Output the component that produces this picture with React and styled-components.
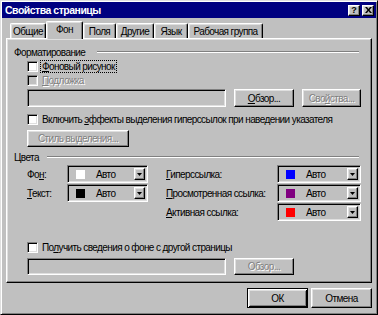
import React from 'react';
import styled, { createGlobalStyle, css } from 'styled-components';

const GlobalStyle = createGlobalStyle`
  html, body { margin: 0; padding: 0; background: #c0c0c0; }
  body {
    font-family: "Liberation Sans", Arial, sans-serif;
    font-size: 10px;
    letter-spacing: -0.6px;
    white-space: nowrap;
    color: #000;
  }
  * { box-sizing: border-box; }
`;

const raised = css`
  border: 1px solid;
  border-color: #fff #000 #000 #fff;
  box-shadow: inset -1px -1px #808080, inset 1px 1px #dfdfdf;
`;

const sunken = css`
  border: 1px solid;
  border-color: #808080 #fff #fff #808080;
  box-shadow: inset 1px 1px #000, inset -1px -1px #dfdfdf;
`;

const disabledText = css`
  color: #808080;
  text-shadow: 1px 1px 0 #fff;
`;

const Window = styled.div`
  width: 378px;
  height: 315px;
  background: #c0c0c0;
  border: 1px solid;
  border-color: #dfdfdf #000 #000 #dfdfdf;
  box-shadow: inset 1px 1px #fff, inset -1px -1px #808080;
  padding: 1px;
  display: flex;
  flex-direction: column;
`;

const TitleBar = styled.div`
  height: 16px;
  background: #000080;
  display: flex;
  align-items: center;
  justify-content: space-between;
  padding: 0 2px 0 3px;
`;

const Title = styled.span`
  color: #fff;
  font-weight: bold;
  font-size: 10.5px;
  letter-spacing: -0.5px;
`;

const CaptionButtons = styled.div`
  display: flex;
  gap: 2px;
`;

const CaptionButton = styled.div`
  width: 12px;
  height: 11px;
  background: #c0c0c0;
  ${raised}
  display: flex;
  align-items: center;
  justify-content: center;
  font-weight: bold;
  font-size: 9px;
  letter-spacing: 0;
  line-height: 1;
`;

const Body = styled.div`
  flex: 1;
  display: flex;
  flex-direction: column;
  padding: 0 4px;
`;

const TabStrip = styled.div`
  margin-top: 3px;
  height: 17px;
  display: flex;
  align-items: flex-end;
  padding-left: 4px;
`;

const Tab = styled.div`
  width: ${p => p.$w}px;
  height: ${p => (p.$active ? 18 : 15)}px;
  margin-bottom: ${p => (p.$active ? -1 : 0)}px;
  position: relative;
  z-index: ${p => (p.$active ? 1 : 0)};
  background: #c0c0c0;
  border-top: 1px solid #fff;
  border-left: 1px solid #fff;
  border-right: 1px solid #000;
  border-radius: 2px 2px 0 0;
  box-shadow: inset -1px 0 #808080, inset 1px 1px #dfdfdf;
  display: flex;
  align-items: center;
  justify-content: center;
  padding-bottom: ${p => (p.$active ? 2 : 0)}px;
`;

const Panel = styled.div`
  height: 245px;
  ${raised}
  padding: 7px 8px 0 7px;
  display: flex;
  flex-direction: column;
`;

const GroupHeader = styled.div`
  height: 12px;
  display: flex;
  align-items: center;
  margin-top: ${p => p.$mt || 0}px;
`;

const GroupLine = styled.div`
  flex: 1;
  height: 2px;
  border-top: 1px solid #808080;
  border-bottom: 1px solid #fff;
  margin: 0 4px 0 ${p => p.$gap}px;
`;

const Indent = styled.div`
  padding-left: 13px;
  display: flex;
  flex-direction: column;
`;

const CheckRow = styled.div`
  height: 13px;
  display: flex;
  align-items: center;
  margin-top: ${p => p.$mt || 0}px;
  ${p => p.$disabled && disabledText}
`;

const Box = styled.div`
  width: 11px;
  height: 11px;
  ${sunken}
  background: ${p => (p.$disabled ? '#c0c0c0' : '#fff')};
  margin-right: 4px;
  flex-shrink: 0;
`;

const Focus = styled.span`
  outline: 1px dotted #000;
  padding: 0 1px;
  margin-left: -1px;
`;

const Row = styled.div`
  display: flex;
  align-items: center;
  gap: 8px;
  margin-top: ${p => p.$mt || 0}px;
`;

const Field = styled.div`
  width: ${p => p.$w}px;
  height: ${p => p.$h}px;
  ${sunken}
  background: #c0c0c0;
`;

const Button = styled.div`
  width: ${p => p.$w}px;
  height: ${p => p.$h || 18}px;
  background: #c0c0c0;
  ${raised}
  ${p => p.$default && css`
    border-color: #000;
    box-shadow: inset 1px 1px #fff, inset -1px -1px #000, inset 2px 2px #dfdfdf, inset -2px -2px #808080;
  `}
  display: flex;
  align-items: center;
  justify-content: center;
  ${p => p.$disabled && disabledText}
`;

const ColorArea = styled.div`
  display: flex;
  gap: 18px;
  margin-top: 2px;
`;

const ColorColumn = styled.div`
  display: grid;
  grid-template-columns: ${p => p.$label}px ${p => p.$combo}px;
  grid-auto-rows: 18px;
  row-gap: 1px;
  align-items: center;
`;

const Combo = styled.div`
  height: 18px;
  ${sunken}
  background: #c0c0c0;
  display: flex;
  align-items: center;
  padding: 2px;
`;

const Swatch = styled.div`
  width: 9px;
  height: 9px;
  background: ${p => p.$color};
  margin-left: 6px;
  flex-shrink: 0;
`;

const ComboText = styled.span`
  margin-left: 11px;
  flex: 1;
`;

const DropButton = styled.div`
  width: 11px;
  height: 100%;
  background: #c0c0c0;
  ${raised}
  display: flex;
  align-items: center;
  justify-content: center;
`;

const Footer = styled.div`
  display: flex;
  justify-content: flex-end;
  gap: 3px;
  margin-top: 5px;
`;

const Arrow = () => (
  <svg width="5" height="3" viewBox="0 0 5 3">
    <path d="M0 0h5L2.5 3z" fill="#000" />
  </svg>
);

const ColorCombo = ({ color }) => (
  <Combo>
    <Swatch $color={color} />
    <ComboText>Авто</ComboText>
    <DropButton><Arrow /></DropButton>
  </Combo>
);

const tabs = [
  { label: 'Общие', w: 36 },
  { label: 'Фон', w: 37, active: true },
  { label: 'Поля', w: 33 },
  { label: 'Другие', w: 38 },
  { label: 'Язык', w: 34 },
  { label: 'Рабочая группа', w: 75 },
];

export default function App() {
  return (
    <>
      <GlobalStyle />
      <Window>
        <TitleBar>
          <Title>Свойства страницы</Title>
          <CaptionButtons>
            <CaptionButton>?</CaptionButton>
            <CaptionButton>
              <svg width="7" height="6" viewBox="0 0 7 6">
                <path d="M0 0h2l1.5 2L5 0h2L4.5 3 7 6H5L3.5 4 2 6H0l2.5-3z" fill="#000" />
              </svg>
            </CaptionButton>
          </CaptionButtons>
        </TitleBar>
        <Body>
          <TabStrip>
            {tabs.map(t => (
              <Tab key={t.label} $w={t.w} $active={t.active}>{t.label}</Tab>
            ))}
          </TabStrip>
          <Panel>
            <GroupHeader>
              Форматирование
              <GroupLine $gap={12} />
            </GroupHeader>
            <Indent>
              <CheckRow $mt={2}>
                <Box />
                <Focus><u>Ф</u>оновый рисунок</Focus>
              </CheckRow>
              <CheckRow $mt={1} $disabled>
                <Box $disabled />
                <span><u>П</u>одложка</span>
              </CheckRow>
              <Row $mt={2}>
                <Field $w={199} $h={18} />
                <Button $w={60}><span><u>О</u>бзор...</span></Button>
                <Button $w={59} $disabled><span>Сво<u>й</u>ства...</span></Button>
              </Row>
              <CheckRow $mt={6}>
                <Box />
                <span>Включить <u>э</u>ффекты выделения гиперссылок при наведении указателя</span>
              </CheckRow>
              <Row $mt={4}>
                <Button $w={102} $h={17} $disabled>Стиль выделения...</Button>
              </Row>
            </Indent>
            <GroupHeader $mt={4}>
              Цвета
              <GroupLine $gap={8} />
            </GroupHeader>
            <Indent>
              <ColorArea>
                <ColorColumn $label={40} $combo={81}>
                  <span>Фо<u>н</u>:</span>
                  <ColorCombo color="#fff" />
                  <span><u>Т</u>екст:</span>
                  <ColorCombo color="#000" />
                </ColorColumn>
                <ColorColumn $label={111} $combo={84}>
                  <span><u>Г</u>иперссылка:</span>
                  <ColorCombo color="#0000ff" />
                  <span><u>П</u>росмотренная ссылка:</span>
                  <ColorCombo color="#800080" />
                  <span><u>А</u>ктивная ссылка:</span>
                  <ColorCombo color="#ff0000" />
                </ColorColumn>
              </ColorArea>
              <CheckRow $mt={20}>
                <Box />
                <span>По<u>л</u>учить сведения о фоне с другой страницы</span>
              </CheckRow>
              <Row $mt={4}>
                <Field $w={199} $h={17} />
                <Button $w={60} $h={17} $disabled>Обзор...</Button>
              </Row>
            </Indent>
          </Panel>
          <Footer>
            <Button $w={61} $h={20} $default>ОК</Button>
            <Button $w={61} $h={20}>Отмена</Button>
          </Footer>
        </Body>
      </Window>
    </>
  );
}
